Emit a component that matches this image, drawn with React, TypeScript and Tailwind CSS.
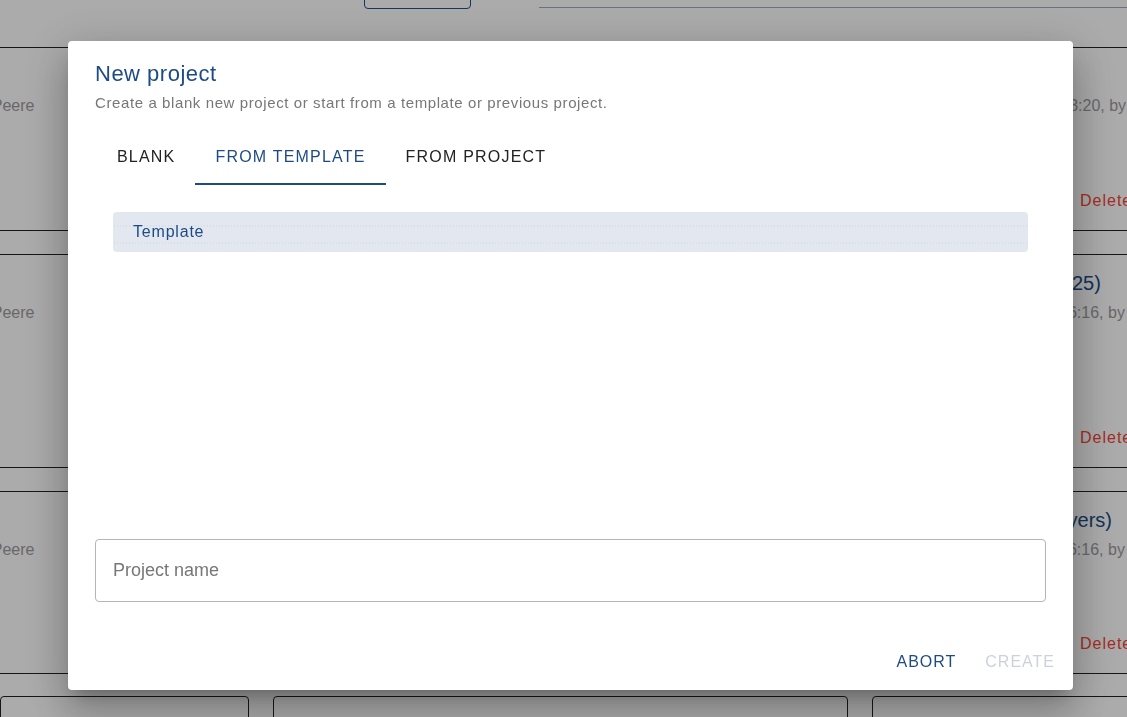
import { useState } from "react";

type ProjectRow = {
  height: string;
  title: string;
  edited: string;
  owner: string;
};

const rows: ProjectRow[] = [
  { height: "h-[184px]", title: "Harbour area", edited: "Last edited 03.06.2024 13:20", owner: "Jan Peere" },
  { height: "h-[214px]", title: "Quay wall repair (2025)", edited: "Last edited 11.05.2024 16:16", owner: "Jan Peere" },
  { height: "h-[183px]", title: "Ground water (all layers)", edited: "Last edited 11.05.2024 16:16", owner: "Jan Peere" },
];

function ProjectsPage() {
  return (
    <div className="flex flex-col">
      <div className="-mt-[31px] flex h-[40px] items-start">
        <button className="ml-[364px] h-[40px] w-[107px] rounded-[4px] border border-[#24508a]" />
        <div className="ml-[68px] h-[39px] flex-1 border-b border-[#9eabbd]" />
      </div>

      <div className="mt-[38px] -ml-[308px] flex flex-col gap-[23px]">
        {rows.map((row) => (
          <div key={row.title} className="flex gap-6">
            <div className={`${row.height} flex w-[1156px] shrink-0 flex-col border-y border-[#222] pl-[32px] pt-4`}>
              <div className="text-[20px] leading-6 text-[#1e4b85]">{row.title}</div>
              <div className="mt-[6px] text-[16px] leading-6 text-[#9c9c9c]">
                Last edited 14.02.2024 08:20, by Jan Peere
              </div>
            </div>
            <div className={`${row.height} flex w-[320px] shrink-0 flex-col border-y border-[#222] pl-[21px] pt-4`}>
              <div className="whitespace-nowrap text-[20px] leading-6 text-[#1e4b85]">{row.title}</div>
              <div className="mt-[6px] whitespace-nowrap text-[16px] leading-6 text-[#9c9c9c]">
                {row.edited}, by {row.owner}
              </div>
              <div className="mt-auto ml-[187px] pb-[17px] text-[16px] leading-6 tracking-[1px] text-[#f44336]">
                Delete
              </div>
            </div>
          </div>
        ))}
      </div>

      <div className="mt-[22px] flex gap-6">
        <div className="h-[60px] w-[249px] shrink-0 rounded-[4px] border border-[#222]" />
        <div className="h-[60px] w-[575px] shrink-0 rounded-[4px] border border-[#222]" />
        <div className="h-[60px] w-[300px] shrink-0 rounded-[4px] border border-[#222]" />
      </div>
    </div>
  );
}

const tabs = ["Blank", "From template", "From project"];

function NewProjectDialog() {
  const [tab, setTab] = useState(1);
  const [name, setName] = useState("");

  return (
    <div className="fixed left-[68px] top-[41px] flex h-[649px] w-[1005px] flex-col rounded-[4px] bg-white shadow-[0_11px_15px_-7px_rgba(0,0,0,0.22),0_24px_38px_3px_rgba(0,0,0,0.16),0_9px_46px_8px_rgba(0,0,0,0.14)]">
      <div className="px-[27px] pt-[20px]">
        <h2 className="text-[22px] leading-[26px] tracking-[0.5px] text-[#1e4b85]">New project</h2>
        <p className="mt-[6px] text-[15px] leading-[20px] tracking-[0.6px] text-[#777]">
          Create a blank new project or start from a template or previous project.
        </p>
      </div>

      <div className="mt-[24px] flex pl-[29px]">
        {tabs.map((label, i) => (
          <button
            key={label}
            onClick={() => setTab(i)}
            className={`h-[48px] border-b-2 px-5 pb-[6px] text-[16px] uppercase leading-5 tracking-[1.2px] ${
              i === tab ? "border-[#1e4b85] text-[#1e4b85]" : "border-transparent text-[#222]"
            }`}
          >
            {label}
          </button>
        ))}
      </div>

      <div className="flex-1 px-[45px] pt-[27px]">
        <div className="flex h-[40px] items-center rounded-[4px] bg-[#e3e8f0] bg-[radial-gradient(circle,#ccd3dd_0.6px,transparent_0.8px)] bg-[length:3px_17px] bg-[position:0_5.5px] pl-[20px] text-[16px] tracking-[0.8px] text-[#1e4b85]">
          Template
        </div>
      </div>

      <div className="px-[27px]">
        <input
          value={name}
          onChange={(e) => setName(e.target.value)}
          placeholder="Project name"
          className="h-[63px] w-full rounded-[4px] border border-[#b5b5b5] px-[17px] text-[18px] text-[#222] outline-none placeholder:text-[#777]"
        />
      </div>

      <div className="flex justify-end gap-[13px] pb-[10px] pr-[10px] pt-[42px]">
        <button className="h-[36px] px-2 text-[16px] uppercase tracking-[1px] text-[#1e4b85]">Abort</button>
        <button disabled className="h-[36px] px-2 text-[16px] uppercase tracking-[1px] text-[#ccd2db]">
          Create
        </button>
      </div>
    </div>
  );
}

export default function App() {
  return (
    <div className="relative h-[717px] overflow-hidden bg-white font-['Liberation_Sans',Arial,sans-serif]">
      <ProjectsPage />
      <div className="fixed inset-0 bg-black/[0.33]" />
      <NewProjectDialog />
    </div>
  );
}
